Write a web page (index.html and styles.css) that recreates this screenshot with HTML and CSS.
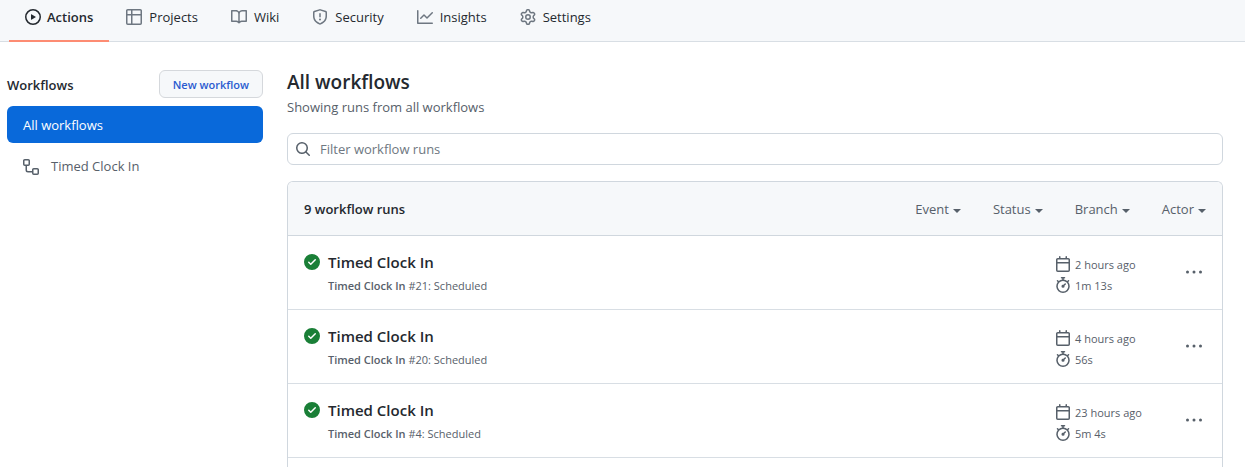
FILE: index.html
```html
<!DOCTYPE html>
<html lang="en">
<head>
<meta charset="utf-8">
<meta name="viewport" content="width=device-width, initial-scale=1">
<title>All workflows</title>
<link rel="stylesheet" href="styles.css">
</head>
<body>
<svg class="sprite" aria-hidden="true">
  <symbol id="check" viewBox="0 0 16 16"><path d="M8 16A8 8 0 1 1 8 0a8 8 0 0 1 0 16Zm3.78-9.72a.751.751 0 0 0-.018-1.042.751.751 0 0 0-1.042-.018L6.75 9.19 5.28 7.72a.751.751 0 0 0-1.042.018.751.751 0 0 0-.018 1.042l2 2a.75.75 0 0 0 1.06 0Z"/></symbol>
  <symbol id="calendar" viewBox="0 0 16 16"><path d="M4.75 0a.75.75 0 0 1 .75.75V2h5V.75a.75.75 0 0 1 1.5 0V2h1.25c.966 0 1.75.784 1.75 1.75v10.5A1.75 1.75 0 0 1 13.25 16H2.75A1.75 1.75 0 0 1 1 14.25V3.75C1 2.784 1.784 2 2.75 2H4V.75A.75.75 0 0 1 4.75 0ZM2.5 7.5v6.75c0 .138.112.25.25.25h10.5a.25.25 0 0 0 .25-.25V7.5Zm10.75-4H2.75a.25.25 0 0 0-.25.25V6h11V3.75a.25.25 0 0 0-.25-.25Z"/></symbol>
  <symbol id="stopwatch" viewBox="0 0 16 16"><path d="M5.75.75A.75.75 0 0 1 6.5 0h3a.75.75 0 0 1 0 1.5h-.75v1l-.001.041a6.724 6.724 0 0 1 3.464 1.435l.007-.006.75-.75a.749.749 0 0 1 1.275.326.749.749 0 0 1-.215.734l-.75.75-.006.007a6.75 6.75 0 1 1-10.548 0L2.72 5.03l-.75-.75a.751.751 0 0 1 .018-1.042.751.751 0 0 1 1.042-.018l.75.75.007.006A6.72 6.72 0 0 1 7.25 2.541V1.5H6.5a.75.75 0 0 1-.75-.75ZM8 14.5a5.25 5.25 0 1 0-.001-10.501A5.25 5.25 0 0 0 8 14.5Zm.389-6.7 1.33-1.33a.75.75 0 1 1 1.061 1.06L9.45 8.861A1.503 1.503 0 0 1 8 10.75a1.499 1.499 0 1 1 .389-2.95Z"/></symbol>
  <symbol id="dots" viewBox="0 0 18 16"><circle cx="2.5" cy="8" r="1.5"/><circle cx="9" cy="8" r="1.5"/><circle cx="15.5" cy="8" r="1.5"/></symbol>
</svg>

<nav class="tabs" aria-label="Repository">
  <a class="tab tab-current" href="#" aria-current="page"><svg class="icon" viewBox="0 0 16 16"><path d="M8 0a8 8 0 1 1 0 16A8 8 0 0 1 8 0ZM1.5 8a6.5 6.5 0 1 0 13 0 6.5 6.5 0 0 0-13 0Zm4.879-2.773 4.264 2.559a.25.25 0 0 1 0 .428l-4.264 2.559A.25.25 0 0 1 6 10.559V5.442a.25.25 0 0 1 .379-.215Z"/></svg>Actions</a>
  <a class="tab" href="#"><svg class="icon" viewBox="0 0 16 16"><path d="M0 1.75C0 .784.784 0 1.75 0h12.5C15.216 0 16 .784 16 1.75v12.5A1.75 1.75 0 0 1 14.25 16H1.75A1.75 1.75 0 0 1 0 14.25ZM6.5 6.5v8h7.75a.25.25 0 0 0 .25-.25V6.5Zm8-1.5V1.75a.25.25 0 0 0-.25-.25H6.5V5Zm-13 1.5v7.75c0 .138.112.25.25.25H5v-8ZM5 5V1.5H1.75a.25.25 0 0 0-.25.25V5Z"/></svg>Projects</a>
  <a class="tab" href="#"><svg class="icon" viewBox="0 0 16 16"><path d="M0 1.75A.75.75 0 0 1 .75 1h4.253c1.227 0 2.317.59 3 1.501A3.743 3.743 0 0 1 11.006 1h4.245a.75.75 0 0 1 .75.75v10.5a.75.75 0 0 1-.75.75h-4.507a2.25 2.25 0 0 0-1.591.659l-.622.621a.75.75 0 0 1-1.06 0l-.622-.621A2.25 2.25 0 0 0 5.258 13H.75a.75.75 0 0 1-.75-.75Zm7.251 10.324.004-5.073-.002-2.253A2.25 2.25 0 0 0 5.003 2.5H1.5v9h3.757a3.75 3.75 0 0 1 1.994.574ZM8.755 4.75l-.004 7.322a3.752 3.752 0 0 1 1.992-.572H14.5v-9h-3.495a2.25 2.25 0 0 0-2.25 2.25Z"/></svg>Wiki</a>
  <a class="tab" href="#"><svg class="icon" viewBox="0 0 16 16"><path d="M7.467.133a1.748 1.748 0 0 1 1.066 0l5.25 1.68A1.75 1.75 0 0 1 15 3.48V7c0 1.566-.32 3.182-1.303 4.682-.983 1.498-2.585 2.813-5.032 3.855a1.697 1.697 0 0 1-1.33 0c-2.447-1.042-4.049-2.357-5.032-3.855C1.32 10.182 1 8.566 1 7V3.48a1.75 1.75 0 0 1 1.217-1.667Zm.61 1.429a.25.25 0 0 0-.153 0l-5.25 1.68a.25.25 0 0 0-.174.238V7c0 1.358.275 2.666 1.057 3.86.784 1.194 2.121 2.34 4.366 3.297a.196.196 0 0 0 .154 0c2.245-.956 3.582-2.104 4.366-3.298C13.225 9.666 13.5 8.36 13.5 7V3.48a.251.251 0 0 0-.174-.237l-5.25-1.68ZM8.75 4.75v3a.75.75 0 0 1-1.5 0v-3a.75.75 0 0 1 1.5 0ZM9 10.5a1 1 0 1 1-2 0 1 1 0 0 1 2 0Z"/></svg>Security</a>
  <a class="tab" href="#"><svg class="icon" viewBox="0 0 16 16"><path d="M1.5 1.75V13.5h13.75a.75.75 0 0 1 0 1.5H.75a.75.75 0 0 1-.75-.75V1.75a.75.75 0 0 1 1.5 0Zm14.28 2.53-5.25 5.25a.75.75 0 0 1-1.06 0L7 7.06 4.28 9.78a.751.751 0 0 1-1.042-.018.751.751 0 0 1-.018-1.042l3.25-3.25a.75.75 0 0 1 1.06 0L10 7.94l4.72-4.72a.751.751 0 0 1 1.042.018.751.751 0 0 1 .018 1.042Z"/></svg>Insights</a>
  <a class="tab" href="#"><svg class="icon" viewBox="0 0 16 16"><path d="M8 0a8.2 8.2 0 0 1 .701.031C9.444.095 9.99.645 10.16 1.29l.288 1.107c.018.066.079.158.212.224.231.114.454.243.668.386.123.082.233.09.299.071l1.103-.303c.644-.176 1.392.021 1.82.63.27.385.506.792.704 1.218.315.675.111 1.422-.364 1.891l-.814.806c-.049.048-.098.147-.088.294.016.257.016.515 0 .772-.01.147.038.246.088.294l.814.806c.475.469.679 1.216.364 1.891a7.977 7.977 0 0 1-.704 1.217c-.428.61-1.176.807-1.82.63l-1.102-.302c-.067-.019-.177-.011-.3.071a5.909 5.909 0 0 1-.668.386c-.133.066-.194.158-.211.224l-.29 1.106c-.168.646-.715 1.196-1.458 1.26a8.006 8.006 0 0 1-1.402 0c-.743-.064-1.289-.614-1.458-1.26l-.289-1.106c-.018-.066-.079-.158-.212-.224a5.738 5.738 0 0 1-.668-.386c-.123-.082-.233-.09-.299-.071l-1.103.303c-.644.176-1.392-.021-1.82-.63a8.12 8.12 0 0 1-.704-1.218c-.315-.675-.111-1.422.363-1.891l.815-.806c.05-.048.098-.147.088-.294a6.214 6.214 0 0 1 0-.772c.01-.147-.038-.246-.088-.294l-.815-.806C.635 6.045.431 5.298.746 4.623a7.92 7.92 0 0 1 .704-1.217c.428-.61 1.176-.807 1.82-.63l1.102.302c.067.019.177.011.3-.071.214-.143.437-.272.668-.386.133-.066.194-.158.211-.224l.29-1.106C6.009.645 6.556.095 7.299.03 7.53.01 7.764 0 8 0Zm-.571 1.525c-.036.003-.108.036-.137.146l-.289 1.105c-.147.561-.549.967-.998 1.189-.173.086-.34.183-.5.29-.417.278-.97.423-1.529.27l-1.103-.303c-.109-.03-.175.016-.195.045-.22.312-.412.644-.573.99-.014.031-.021.11.059.19l.815.806c.411.406.562.957.53 1.456a4.709 4.709 0 0 0 0 .582c.032.499-.119 1.05-.53 1.456l-.815.806c-.081.08-.073.159-.059.19.162.346.353.677.573.989.02.03.085.076.195.046l1.102-.303c.56-.153 1.113-.008 1.53.27.161.107.328.204.501.29.447.222.85.629.997 1.189l.289 1.105c.029.109.101.143.137.146a6.6 6.6 0 0 0 1.142 0c.036-.003.108-.036.137-.146l.289-1.105c.147-.561.549-.967.998-1.189.173-.086.34-.183.5-.29.417-.278.97-.423 1.529-.27l1.103.303c.109.029.175-.016.195-.045.22-.313.411-.644.573-.99.014-.031.021-.11-.059-.19l-.815-.806c-.411-.406-.562-.957-.53-1.456a4.709 4.709 0 0 0 0-.582c-.032-.499.119-1.05.53-1.456l.815-.806c.081-.08.073-.159.059-.19a6.464 6.464 0 0 0-.573-.989c-.02-.03-.085-.076-.195-.046l-1.102.303c-.56.153-1.113.008-1.53-.27a4.44 4.44 0 0 0-.501-.29c-.447-.222-.85-.629-.997-1.189l-.289-1.105c-.029-.11-.101-.143-.137-.146a6.6 6.6 0 0 0-1.142 0ZM11 8a3 3 0 1 1-6 0 3 3 0 0 1 6 0ZM9.5 8a1.5 1.5 0 1 0-3.001.001A1.5 1.5 0 0 0 9.5 8Z"/></svg>Settings</a>
</nav>

<div class="layout">
  <aside class="sidebar">
    <div class="sidebar-head">
      <h2 class="sidebar-title">Workflows</h2>
      <button class="new-button" type="button">New workflow</button>
    </div>
    <nav class="side-nav" aria-label="Workflows">
      <a class="side-link side-link-current" href="#" aria-current="page">All workflows</a>
      <a class="side-link" href="#"><svg class="icon" viewBox="0 0 16 16"><path d="M0 1.75C0 .784.784 0 1.75 0h3.5C6.216 0 7 .784 7 1.75v3.5A1.75 1.75 0 0 1 5.25 7H4v4a1 1 0 0 0 1 1h4v-1.25C9 9.784 9.784 9 10.75 9h3.5c.966 0 1.75.784 1.75 1.75v3.5A1.75 1.75 0 0 1 14.25 16h-3.5A1.75 1.75 0 0 1 9 14.25v-.75H5A2.5 2.5 0 0 1 2.5 11V7h-.75A1.75 1.75 0 0 1 0 5.25Zm1.75-.25a.25.25 0 0 0-.25.25v3.5c0 .138.112.25.25.25h3.5a.25.25 0 0 0 .25-.25v-3.5a.25.25 0 0 0-.25-.25Zm9 9a.25.25 0 0 0-.25.25v3.5c0 .138.112.25.25.25h3.5a.25.25 0 0 0 .25-.25v-3.5a.25.25 0 0 0-.25-.25Z"/></svg>Timed Clock In</a>
    </nav>
  </aside>

  <main class="content">
    <h1 class="title">All workflows</h1>
    <p class="subtitle">Showing runs from all workflows</p>
    <label class="search">
      <svg class="icon" viewBox="0 0 16 16"><path d="M10.68 11.74a6 6 0 0 1-7.922-8.982 6 6 0 0 1 8.982 7.922l3.04 3.04a.749.749 0 0 1-.326 1.275.749.749 0 0 1-.734-.215ZM11.5 7a4.499 4.499 0 1 0-8.997 0A4.499 4.499 0 0 0 11.5 7Z"/></svg>
      <input class="search-input" type="text" placeholder="Filter workflow runs" aria-label="Filter workflow runs">
    </label>

    <section class="box">
      <header class="box-head">
        <strong class="count">9 workflow runs</strong>
        <div class="filters">
          <button class="filter" type="button">Event</button>
          <button class="filter" type="button">Status</button>
          <button class="filter" type="button">Branch</button>
          <button class="filter" type="button">Actor</button>
        </div>
      </header>
      <ul class="runs">
        <li class="run">
          <svg class="icon status" role="img" aria-label="Success"><use href="#check"/></svg>
          <div class="run-text">
            <a class="run-title" href="#">Timed Clock In</a>
            <span class="run-sub"><b class="run-name">Timed Clock In</b> #21: Scheduled</span>
          </div>
          <div class="meta">
            <span class="meta-line"><svg class="icon"><use href="#calendar"/></svg>2 hours ago</span>
            <span class="meta-line"><svg class="icon"><use href="#stopwatch"/></svg>1m 13s</span>
          </div>
          <button class="more" type="button" aria-label="Show options"><svg class="dots"><use href="#dots"/></svg></button>
        </li>
        <li class="run">
          <svg class="icon status" role="img" aria-label="Success"><use href="#check"/></svg>
          <div class="run-text">
            <a class="run-title" href="#">Timed Clock In</a>
            <span class="run-sub"><b class="run-name">Timed Clock In</b> #20: Scheduled</span>
          </div>
          <div class="meta">
            <span class="meta-line"><svg class="icon"><use href="#calendar"/></svg>4 hours ago</span>
            <span class="meta-line"><svg class="icon"><use href="#stopwatch"/></svg>56s</span>
          </div>
          <button class="more" type="button" aria-label="Show options"><svg class="dots"><use href="#dots"/></svg></button>
        </li>
        <li class="run">
          <svg class="icon status" role="img" aria-label="Success"><use href="#check"/></svg>
          <div class="run-text">
            <a class="run-title" href="#">Timed Clock In</a>
            <span class="run-sub"><b class="run-name">Timed Clock In</b> #4: Scheduled</span>
          </div>
          <div class="meta">
            <span class="meta-line"><svg class="icon"><use href="#calendar"/></svg>23 hours ago</span>
            <span class="meta-line"><svg class="icon"><use href="#stopwatch"/></svg>5m 4s</span>
          </div>
          <button class="more" type="button" aria-label="Show options"><svg class="dots"><use href="#dots"/></svg></button>
        </li>
      </ul>
    </section>
  </main>
</div>
</body>
</html>
```

FILE: styles.css
```css
* {
  box-sizing: border-box;
}

body {
  margin: 0;
  min-height: 100vh;
  display: flex;
  flex-direction: column;
  background: #ffffff;
  color: #24292f;
  font-family: "Segoe UI", "Open Sans", "Noto Sans", sans-serif;
  font-size: 13px;
  line-height: 21px;
}

h1, h2, p, ul {
  margin: 0;
  padding: 0;
}

a {
  color: inherit;
  text-decoration: none;
}

button, input {
  font: inherit;
  color: inherit;
}

.sprite {
  display: none;
}

.icon {
  width: 16px;
  height: 16px;
  flex: none;
  fill: #57606a;
}

/* Repository tabs */
.tabs {
  display: flex;
  gap: 1px;
  padding-left: 9px;
  background: #f6f8fa;
  box-shadow: inset 0 -1px #d8dee4;
}

.tab {
  display: flex;
  align-items: center;
  gap: 7px;
  padding: 7px 16px 12px;
  border-bottom: 2px solid transparent;
}

.tab .icon {
  margin-bottom: 2px;
  fill: #6e7781;
}

.tab-current {
  gap: 6px;
  border-bottom-color: #fd8c73;
  font-weight: 600;
}

.tab-current .icon {
  fill: #24292f;
}

/* Page columns */
.layout {
  flex: 1;
  display: grid;
  grid-template-columns: 256px minmax(0, 1fr);
  gap: 24px;
  padding: 25px 22px 0 7px;
}

.sidebar {
  padding-top: 3px;
}

.sidebar-head {
  display: flex;
  align-items: center;
  justify-content: space-between;
  margin-bottom: 8px;
}

.sidebar-title {
  padding-top: 2px;
  font-size: 13px;
  font-weight: 600;
}

.new-button {
  height: 28px;
  padding: 0 13px;
  border: 1px solid #d5d8dc;
  border-radius: 6px;
  background: #f6f8fa;
  color: #2a5bd0;
  font-size: 11px;
  font-weight: 600;
}

.side-nav {
  display: flex;
  flex-direction: column;
  gap: 5px;
}

.side-link {
  display: flex;
  align-items: center;
  gap: 12px;
  padding: 8px 16px;
  border-radius: 6px;
  color: #57606a;
}

.side-link-current {
  padding: 9px 16px 7px;
  background: #0969da;
  color: #ffffff;
  font-weight: 500;
}

/* Main column */
.content {
  display: flex;
  flex-direction: column;
}

.title {
  font-size: 19px;
  line-height: 30px;
  font-weight: 600;
}

.subtitle {
  color: #57606a;
}

.search {
  display: flex;
  align-items: center;
  gap: 9px;
  height: 32px;
  margin: 15px 0 16px;
  padding: 0 7px;
  border: 1px solid #d0d7de;
  border-radius: 6px;
}

.search-input {
  flex: 1;
  min-width: 0;
  padding: 0;
  border: 0;
  outline: 0;
  background: transparent;
}

.search-input::placeholder {
  color: #6e7781;
  opacity: 1;
}

.box {
  flex: 1;
  border: 1px solid #d0d7de;
  border-bottom: 0;
  border-radius: 6px 6px 0 0;
}

.box-head {
  display: flex;
  align-items: center;
  justify-content: space-between;
  padding: 17px 16px 15px;
  border-bottom: 1px solid #d0d7de;
  border-radius: 5px 5px 0 0;
  background: #f6f8fa;
}

.count {
  font-weight: 600;
}

.filters {
  display: flex;
  gap: 32px;
}

.filter {
  display: flex;
  align-items: center;
  gap: 4px;
  padding: 0;
  border: 0;
  background: none;
  color: #57606a;
}

.filter::after {
  content: "";
  margin-top: 2px;
  border: 4px solid transparent;
  border-top-color: currentColor;
  border-bottom: 0;
}

.runs {
  list-style: none;
}

.run {
  display: flex;
  padding: 14px 16px 13px;
  border-bottom: 1px solid #d8dee4;
}

.status {
  margin: 4px 8px 0 0;
  fill: #1a7f37;
}

.run-text {
  flex: 1;
  display: flex;
  flex-direction: column;
  align-items: flex-start;
  gap: 1px;
}

.run-title {
  font-size: 15px;
  line-height: 24px;
  font-weight: 600;
}

.run-sub {
  color: #57606a;
  font-size: 11px;
}

.run-name {
  font-weight: 600;
}

.meta {
  width: 130px;
  padding-top: 4px;
  color: #57606a;
  font-size: 11px;
}

.meta-line {
  display: flex;
  align-items: center;
  gap: 4px;
}

.meta-line .icon {
  margin-bottom: 2px;
}

.more {
  align-self: center;
  display: flex;
  padding: 0;
  margin: 0 3px 2px 0;
  border: 0;
  background: none;
}

.dots {
  width: 18px;
  height: 16px;
  fill: #57606a;
}
```
